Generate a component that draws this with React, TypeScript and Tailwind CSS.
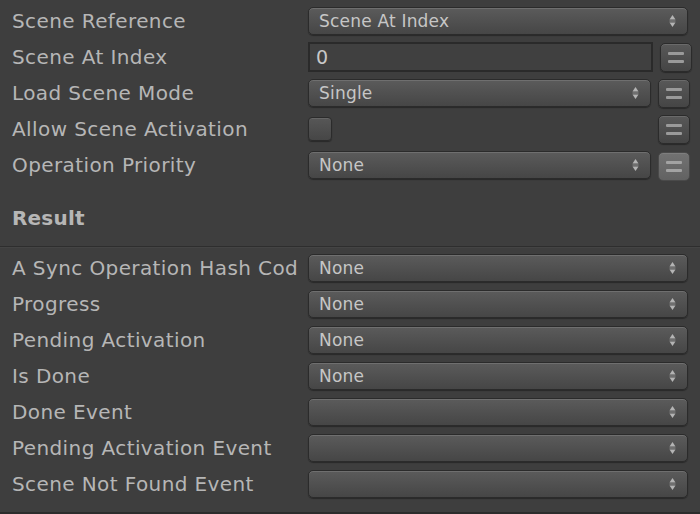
import React from "react";

const font = { fontFamily: '"DejaVu Sans", "Liberation Sans", sans-serif' };

function Arrows() {
  return (
    <svg width="7" height="14" viewBox="0 0 7 14" className="shrink-0">
      <path d="M3.5 1 L6.5 5.5 L0.5 5.5 Z" fill="#b4b4b4" />
      <rect x="0.5" y="6.5" width="6" height="1" fill="#8e8e8e" />
      <path d="M0.5 8.5 L6.5 8.5 L3.5 13 Z" fill="#b4b4b4" />
    </svg>
  );
}

function Dropdown({ value, className = "" }: { value?: string; className?: string }) {
  return (
    <div
      className={
        "h-[28px] flex items-center justify-between rounded-[5px] border border-[#2b2b2b] bg-gradient-to-b from-[#5b5b5b] to-[#464646] shadow-[inset_0_1px_0_#6f6f6f,0_1px_1px_rgba(0,0,0,0.35)] pl-[10px] pr-[11px] " +
        className
      }
    >
      <span className="text-[17px] leading-[22px] tracking-[0.2px] text-[#c6c6c6] whitespace-nowrap">{value ?? ""}</span>
      <Arrows />
    </div>
  );
}

function MenuButton({ active = false }: { active?: boolean }) {
  return (
    <div
      className={
        "w-[32px] h-[29px] shrink-0 rounded-[5px] border flex flex-col items-center justify-center gap-[5px] " +
        (active
          ? "border-[#4a4a4a] bg-gradient-to-b from-[#727272] to-[#626262] shadow-[inset_0_1px_0_#7e7e7e]"
          : "border-[#2b2b2b] bg-gradient-to-b from-[#585858] to-[#454545] shadow-[inset_0_1px_0_#6a6a6a,0_1px_1px_rgba(0,0,0,0.35)]")
      }
    >
      <div className={"w-[16px] h-[3px] rounded-[1px] " + (active ? "bg-[#a3a3a3]" : "bg-[#9a9a9a]")} />
      <div className={"w-[16px] h-[3px] rounded-[1px] " + (active ? "bg-[#a3a3a3]" : "bg-[#9a9a9a]")} />
    </div>
  );
}

function Row({ label, children }: { label: string; children?: React.ReactNode }) {
  return (
    <div className="h-[36px] flex items-center">
      <div className="w-[298px] shrink-0 pl-[12px] overflow-hidden whitespace-nowrap text-[20px] leading-[26px] tracking-[0.4px] text-[#b6b6b6]">
        {label}
      </div>
      <div className="flex-1 flex items-center pl-[10px]">{children}</div>
    </div>
  );
}

export default function App() {
  return (
    <div className="w-[700px] h-[514px] bg-[#3e3e3e] overflow-hidden flex flex-col" style={font}>
      <div className="pt-[3px]">
        <Row label="Scene Reference">
          <Dropdown value="Scene At Index" className="w-[380px]" />
        </Row>
        <Row label="Scene At Index">
          <div className="w-[345px] h-[30px] border-2 border-[#2a2a2a] bg-[#404040] flex items-center pl-[6px] text-[19px] leading-[24px] text-[#c8c8c8]">
            0
          </div>
          <div className="ml-[7px]">
            <MenuButton />
          </div>
        </Row>
        <Row label="Load Scene Mode">
          <Dropdown value="Single" className="w-[343px]" />
          <div className="ml-[7px]">
            <MenuButton />
          </div>
        </Row>
        <Row label="Allow Scene Activation">
          <div className="w-[24px] h-[24px] rounded-[4px] border border-[#2b2b2b] bg-gradient-to-b from-[#575757] to-[#464646] shadow-[inset_0_1px_0_#666,0_1px_1px_rgba(0,0,0,0.35)]" />
          <div className="ml-[326px]">
            <MenuButton />
          </div>
        </Row>
        <Row label="Operation Priority">
          <Dropdown value="None" className="w-[343px]" />
          <div className="ml-[7px] mt-[2px]">
            <MenuButton active />
          </div>
        </Row>
      </div>

      <div className="pt-[24px] pl-[12px] h-[63px] text-[20px] leading-[22px] font-bold tracking-[0.2px] text-[#b6b6b6]">Result</div>
      <div className="h-[1px] bg-[#2e2e2e]" />
      <div className="h-[1px] bg-[#444444]" />

      <div className="pt-[2px]">
        <Row label="A Sync Operation Hash Code">
          <Dropdown value="None" className="w-[380px]" />
        </Row>
        <Row label="Progress">
          <Dropdown value="None" className="w-[380px]" />
        </Row>
        <Row label="Pending Activation">
          <Dropdown value="None" className="w-[380px]" />
        </Row>
        <Row label="Is Done">
          <Dropdown value="None" className="w-[380px]" />
        </Row>
        <Row label="Done Event">
          <Dropdown className="w-[380px]" />
        </Row>
        <Row label="Pending Activation Event">
          <Dropdown className="w-[380px]" />
        </Row>
        <Row label="Scene Not Found Event">
          <Dropdown className="w-[380px]" />
        </Row>
      </div>
      <div className="flex-1" />
      <div className="h-[2px] bg-[#2c2c2c]" />
    </div>
  );
}
